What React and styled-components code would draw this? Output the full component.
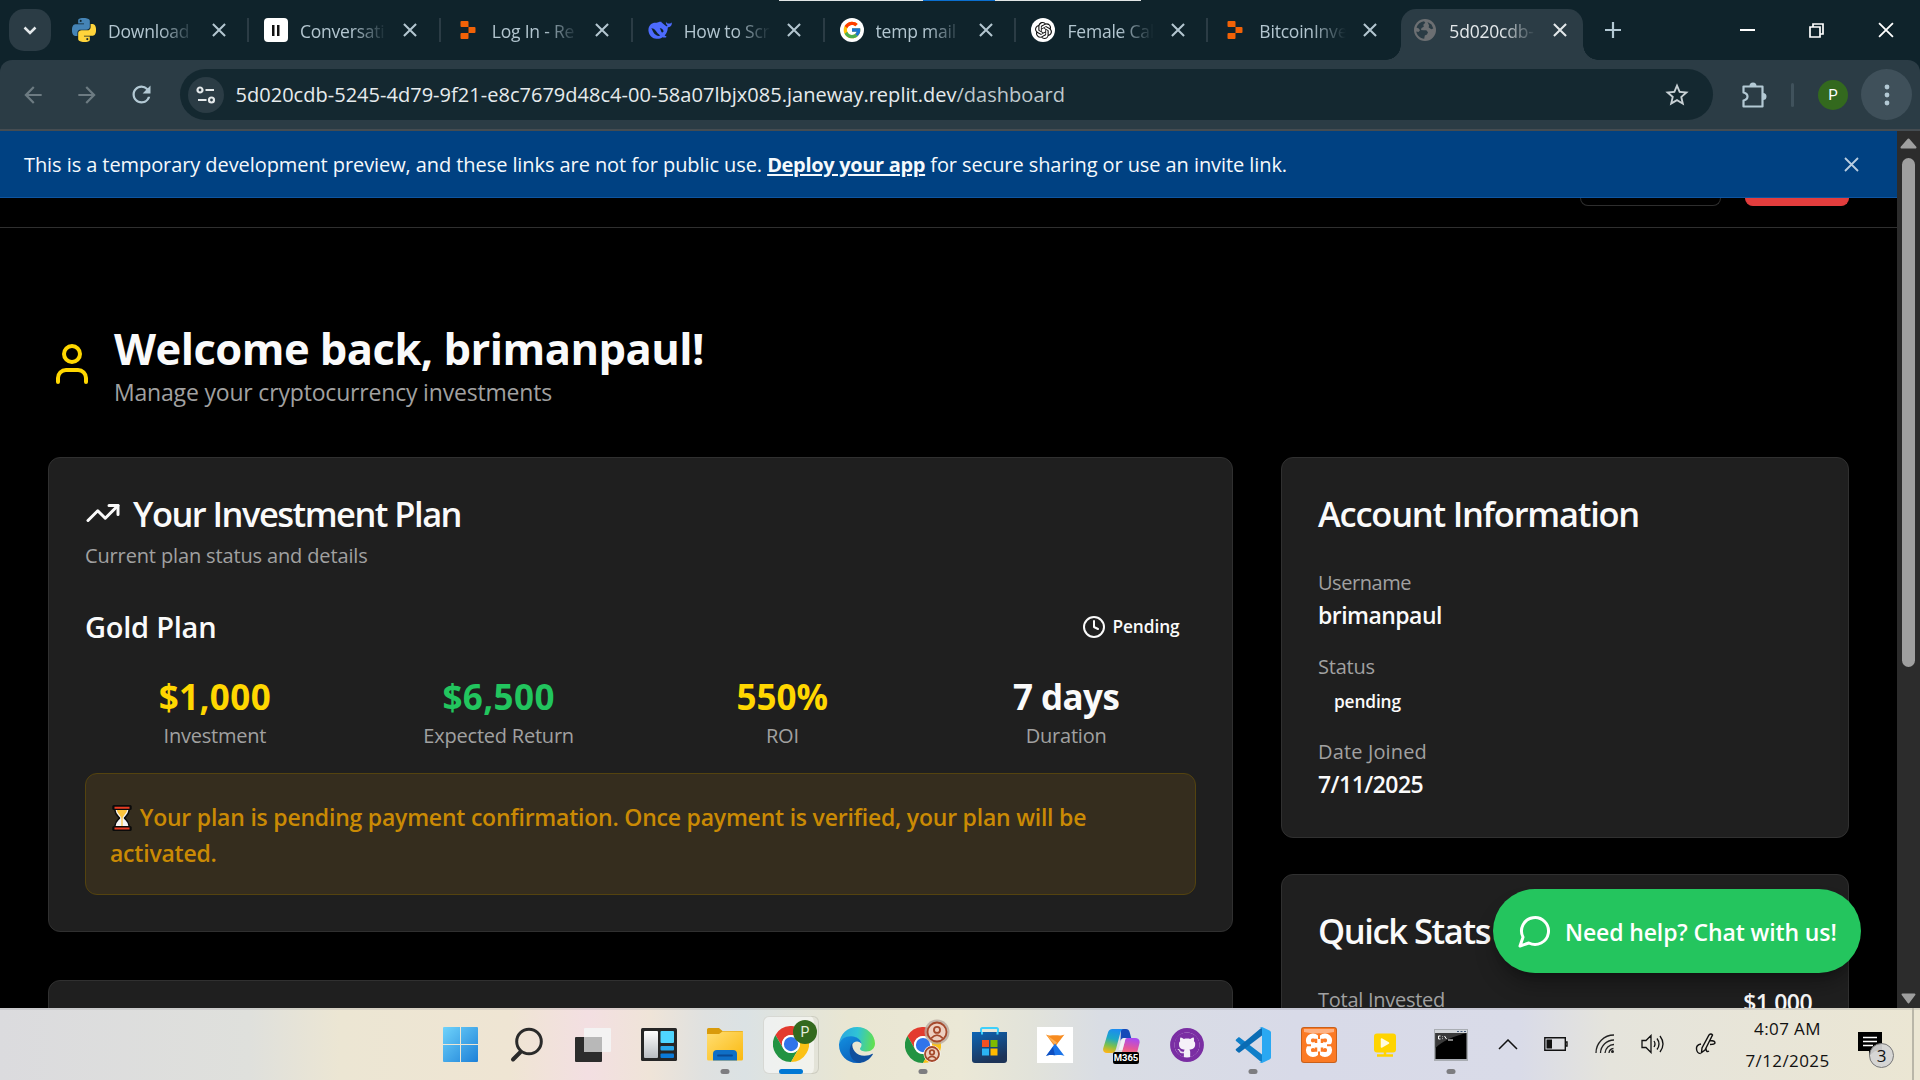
import React from "react";
import styled, { createGlobalStyle, css } from "styled-components";
import { User, TrendingUp, Clock } from "lucide-react";
import { FcGoogle } from "react-icons/fc";
import { FaGithub } from "react-icons/fa";
import { SiOpenai } from "react-icons/si";
import { MdArrowBack, MdArrowForward, MdRefresh, MdStarBorder } from "react-icons/md";

const GlobalStyle = createGlobalStyle`
  * { box-sizing: border-box; margin: 0; }
  html, body { margin: 0; background: #000; overflow: hidden; }
  body { font-family: "Open Sans", "Noto Sans", sans-serif; }
  svg { display: block; flex: none; }
  button { font: inherit; color: inherit; border: 0; background: none; padding: 0; }
`;

/* ---------- window ---------- */

const Desktop = styled.div`
  position: relative;
  width: 1920px;
  height: 1080px;
  display: flex;
  flex-direction: column;
  overflow: hidden;
  background: #0f232b;
`;

const ShareBar = styled.div`
  position: absolute;
  top: 0;
  left: 779px;
  width: 362px;
  height: 1px;
  background: linear-gradient(to right, #e2e6e6 144px, #0a6fd0 144px, #0a6fd0 216px, #e2e6e6 216px);
`;

const TabStrip = styled.header`
  height: 60px;
  flex: none;
  display: flex;
  padding: 9px 0 0 9px;
`;

const TabSearch = styled.button`
  width: 42px;
  height: 42px;
  margin-right: 9px;
  border-radius: 15px;
  background: #2b3c45;
  display: grid;
  place-items: center;
`;

const Tab = styled.div`
  position: relative;
  width: ${(p) => (p.$active ? 182 : p.$last ? 190 : 191.9)}px;
  height: ${(p) => (p.$active ? 51 : 42)}px;
  flex: none;
  display: flex;
  align-items: center;
  padding: ${(p) => (p.$active ? "0 17px 9px 12px" : "0 2px 0 12px")};
  color: ${(p) => (p.$active ? "#e3e8ea" : "#b3c6d0")};
  ${(p) =>
    p.$active &&
    css`
      background: #2b3c45;
      border-radius: 15px 15px 0 0;
      &::before,
      &::after {
        content: "";
        position: absolute;
        bottom: 0;
        width: 15px;
        height: 15px;
      }
      &::before {
        right: 100%;
        background: radial-gradient(circle at 0 0, transparent 14.5px, #2b3c45 15px);
      }
      &::after {
        left: 100%;
        background: radial-gradient(circle at 100% 0, transparent 14.5px, #2b3c45 15px);
      }
    `}
`;

const Favicon = styled.span`
  width: 24px;
  height: 24px;
  flex: none;
  display: grid;
  place-items: center;
  overflow: hidden;
  border-radius: ${(p) => p.$radius || 0}px;
  background: ${(p) => p.$bg || "transparent"};
  color: #111;
`;

const TabTitle = styled.span`
  width: 88px;
  margin-left: 12px;
  flex: none;
  overflow: hidden;
  white-space: nowrap;
  font-size: 17.5px;
  line-height: 26px;
  padding-top: 2px;
  letter-spacing: -0.012em;
  mask-image: linear-gradient(to right, #000 52px, transparent 87px);
`;

const TabClose = styled.button`
  width: 15px;
  height: 15px;
  margin-left: 15.5px;
  flex: none;
`;

const TabDivider = styled.i`
  width: 2px;
  height: 24px;
  margin-left: auto;
  margin-right: 1px;
  background: #2b3c45;
`;

const NewTab = styled.button`
  width: 60px;
  height: 42px;
  display: grid;
  place-items: center;
`;

const WindowButtons = styled.div`
  margin-left: auto;
  display: flex;
  height: 42px;
`;

const WindowButton = styled.button`
  width: 69px;
  display: grid;
  place-items: center;
`;

const Toolbar = styled.div`
  height: 71px;
  flex: none;
  display: flex;
  align-items: center;
  padding: 0 8px 2px 15px;
  background: #2b3c45;
  border-radius: 12px 12px 0 0;
  box-shadow: inset 0 -2px 0 #454c51;
  color: #b3c6d0;
`;

const NavButton = styled.button`
  width: 36px;
  height: 36px;
  margin-right: 18px;
  display: grid;
  place-items: center;
  color: ${(p) => (p.$muted ? "#6d7b82" : "#b3c9d4")};
`;

const Omnibox = styled.div`
  width: 1533px;
  height: 51px;
  flex: none;
  margin-left: 3px;
  border-radius: 26px;
  background: #142830;
  display: flex;
  align-items: center;
  padding: 0 22px 0 8px;
`;

const SiteInfo = styled.span`
  width: 36px;
  height: 36px;
  border-radius: 50%;
  background: #2b3c45;
  display: grid;
  place-items: center;
  margin-right: 11.5px;
`;

const Url = styled.span`
  flex: 1;
  font-size: 20px;
  line-height: 30px;
  letter-spacing: 0.0012em;
  color: #e6ebed;
  white-space: nowrap;
  span { color: #bfc8cc; }
`;

const ExtensionsButton = styled.button`
  width: 28px;
  height: 28px;
  margin-left: 27px;
`;

const ToolbarDivider = styled.i`
  width: 3px;
  height: 24px;
  border-radius: 2px;
  background: #40525c;
  margin: 0 24.5px 0 22.5px;
`;

const Avatar = styled.span`
  width: 30px;
  height: 30px;
  border-radius: 50%;
  background: #33691e;
  color: #fff;
  font: 15px/30px Roboto, sans-serif;
  text-align: center;
`;

const MenuButton = styled.button`
  width: 51px;
  height: 51px;
  margin-left: auto;
  border-radius: 50%;
  background: #3f505a;
  display: grid;
  place-items: center;
`;

/* ---------- page ---------- */

const Viewport = styled.div`
  position: relative;
  height: 877px;
  flex: none;
  display: flex;
  overflow: hidden;
  background: #000;
`;

const Page = styled.div`
  width: 1897px;
  flex: none;
  color: #fafafa;
`;

const Banner = styled.div`
  height: 67px;
  display: flex;
  align-items: center;
  justify-content: space-between;
  padding: 0 38px 0 24px;
  background: #004182;
  border-bottom: 1px solid #0f55a0;
  color: #f5f9fc;
  font-size: 20px;
  line-height: 30px;
  letter-spacing: -0.004em;
  a { font-weight: 700; text-decoration: underline; text-underline-offset: 2px; text-decoration-thickness: 2px; letter-spacing: -0.0164em; }
`;

const BannerText = styled.span`
  padding-top: 1px;
`;

const SiteHeader = styled.div`
  height: 30px;
  display: flex;
  justify-content: flex-end;
  gap: 24px;
  padding-right: 48px;
  border-bottom: 1px solid #2f2f2f;
`;

const HeaderButton = styled.div`
  width: ${(p) => p.$width}px;
  height: 8px;
  border-radius: 0 0 9px 9px;
  border: 1px solid ${(p) => p.$color || "#2e2e2e"};
  border-top: 0;
  background: ${(p) => p.$color || "transparent"};
`;

const Main = styled.main`
  padding: 92px 48px 0;
`;

const Welcome = styled.section`
  display: flex;
  align-items: center;
  gap: 18px;
  height: 90px;
  margin-bottom: 47px;
  > svg { margin-bottom: 2px; }
`;

const PageTitle = styled.h1`
  padding-top: 2px;
  height: 54px;
  font-size: 43.5px;
  line-height: 54px;
  font-weight: 700;
  letter-spacing: -0.0121em;
`;

const Subtitle = styled.p`
  font-size: 23px;
  line-height: 36px;
  letter-spacing: -0.008em;
  color: #a1a1a1;
`;

const Columns = styled.div`
  display: grid;
  grid-template-columns: 1185px 568px;
  gap: 48px;
  align-items: start;
`;

const Stack = styled.div`
  display: flex;
  flex-direction: column;
  gap: ${(p) => p.$gap}px;
`;

const Card = styled.section`
  height: ${(p) => p.$height}px;
  padding: 38px 36px 0;
  border: 1px solid #303030;
  border-radius: 12px;
  background: #1f1f1f;
`;

const CardTitle = styled.h2`
  display: flex;
  align-items: center;
  gap: 12px;
  height: 36px;
  font-size: 34.5px;
  line-height: 36px;
  font-weight: 600;
  letter-spacing: ${(p) => p.$tracking}em;
  white-space: nowrap;
  svg { margin-bottom: 3px; }
`;

const Muted = styled.p`
  font-size: 20px;
  line-height: 30px;
  letter-spacing: ${(p) => p.$tracking || -0.01}em;
  color: #a1a1a1;
  white-space: nowrap;
`;

const CardNote = styled(Muted)`
  margin-top: 9px;
`;

const PlanRow = styled.div`
  display: flex;
  align-items: center;
  justify-content: space-between;
  height: 42px;
  margin-top: 35px;
`;

const PlanName = styled.h3`
  font-size: 29px;
  line-height: 42px;
  font-weight: 600;
  letter-spacing: -0.0085em;
`;

const Badge = styled.span`
  display: flex;
  align-items: center;
  gap: 6px;
  padding: 0 16.5px;
  font-size: 17.3px;
  line-height: 24px;
  font-weight: 600;
  letter-spacing: -0.0057em;
  svg { margin-bottom: 1px; }
`;

const Stats = styled.div`
  display: grid;
  grid-template-columns: repeat(4, 1fr);
  gap: 24px;
  margin: 25px 0 22px;
  text-align: center;
`;

const StatValue = styled.div`
  font-size: 35px;
  line-height: 48px;
  font-weight: 700;
  color: ${(p) => p.$color};
  letter-spacing: ${(p) => p.$tracking}em;
`;

const Alert = styled.div`
  height: 122px;
  padding: 25px 24px 23px;
  border: 1px solid #54430f;
  border-radius: 12px;
  background: #352d1e;
  color: #ca8a04;
  font-size: 23px;
  line-height: 36px;
  font-weight: 600;
  letter-spacing: -0.0095em;
`;

const Emoji = styled.svg`
  && { display: inline-block; }
  width: 24px;
  height: 26px;
  vertical-align: -5px;
`;

const Details = styled.dl`
  display: flex;
  flex-direction: column;
  gap: 18px;
  margin-top: 36px;
`;

const Strong = styled.dd`
  margin: -1px 0 1px;
  font-size: 23px;
  line-height: 36px;
  font-weight: 600;
  letter-spacing: -0.0235em;
`;

const StatusBadge = styled.dd`
  height: 37px;
  padding: 8px 16px 0;
  font-size: 17.3px;
  line-height: 24px;
  font-weight: 600;
  letter-spacing: -0.008em;
`;

const StatLine = styled.div`
  display: flex;
  justify-content: space-between;
  margin-top: 36px;
`;

const ChatButton = styled.button`
  position: absolute;
  right: 59px;
  bottom: 35px;
  width: 368px;
  height: 84px;
  display: flex;
  align-items: center;
  gap: 12px;
  padding-left: 24px;
  border-radius: 42px;
  background: #24c55e;
  color: #fff;
  font-size: 23px;
  font-weight: 600;
  letter-spacing: -0.005em;
  white-space: nowrap;
  box-shadow: 0 15px 22px -4px rgba(0, 0, 0, 0.3), 0 6px 9px -6px rgba(0, 0, 0, 0.3);
  span { padding-top: 2px; }
`;

const Scrollbar = styled.div`
  width: 23px;
  display: flex;
  flex-direction: column;
  align-items: center;
  padding: 7px 0 4px;
  background: #2c2c2c;
`;

const Thumb = styled.div`
  width: 13px;
  height: 509px;
  margin: 9px 0 auto;
  border-radius: 7px;
  background: #9f9f9f;
`;

/* ---------- taskbar ---------- */

const Taskbar = styled.footer`
  height: 72px;
  flex: none;
  display: flex;
  padding-left: 428px;
  color: #111;
  background: linear-gradient(to right, #dbdbde 0, #dfe0dc 250px, #ece6d3 340px, #efe5d3 510px, #f3dfe2 588px, #efe4d8 650px, #dfe1e0 705px, #dbe2e4 745px, #e9e6d2 850px, #ebe8d6 960px, #e2e3da 1030px, #d9dde4 1100px, #d8dae8 1300px, #d9dbe8 1520px, #e5e4dc 1610px, #ebe6d3 1920px);
  box-shadow: inset 0 2px 0 rgba(120, 120, 130, 0.18);
`;

const AppSlot = styled.div`
  position: relative;
  width: 66px;
  flex: none;
  display: grid;
  place-items: center;
  padding-top: 1px;
`;

const ActivePlate = styled.div`
  width: 56px;
  height: 58px;
  display: grid;
  place-items: center;
  padding-bottom: 1px;
  border-radius: 6px;
  background: rgba(255, 255, 255, 0.5);
  box-shadow: inset 0 0 0 1px rgba(120, 120, 100, 0.2), inset -6px 0 0 -1px rgba(200, 200, 180, 0.35);
`;

const Running = styled.i`
  position: absolute;
  left: 50%;
  bottom: 6px;
  width: ${(p) => (p.$active ? 24 : 9)}px;
  height: 5px;
  border-radius: 3px;
  transform: translateX(-50%);
  background: ${(p) => (p.$active ? "#0078d4" : "#7d7d80")};
`;

const ProfileBadge = styled.b`
  position: absolute;
  left: 35px;
  top: 12px;
  width: 24px;
  height: 24px;
  border-radius: 50%;
  background: #33691e;
  color: #e6eedf;
  font: 14px/24px Roboto, sans-serif;
  text-align: center;
`;

const PersonBadges = styled.svg`
  position: absolute;
  left: 31px;
  top: 11px;
`;

const M365Label = styled.span`
  position: absolute;
  left: 25px;
  top: 44px;
  width: 26px;
  height: 12px;
  border-radius: 2px;
  background: #000;
  color: #fff;
  font: 700 9.5px/12px Roboto, sans-serif;
  text-align: center;
`;

const TrayItem = styled.div`
  width: ${(p) => p.$width}px;
  flex: none;
  display: grid;
  place-items: center;
  padding-bottom: ${(p) => p.$lift || 0}px;
`;

const ClockText = styled.div`
  width: 101px;
  flex: none;
  padding-top: 5px;
  text-align: center;
  font-size: 17px;
  line-height: 32px;
  letter-spacing: 0.024em;
  white-space: nowrap;
`;

const Notifications = styled.div`
  position: relative;
  width: 76px;
  flex: none;
  padding: 24px 0 0 20px;
  border-right: 2px solid #b9b6a8;
`;

const Count = styled.span`
  position: absolute;
  left: 31px;
  top: 35px;
  width: 25px;
  height: 25px;
  border: 1px solid #777;
  border-radius: 50%;
  background: rgba(212, 212, 212, 0.93);
  font-size: 17px;
  line-height: 23px;
  font-weight: 500;
  text-align: center;
`;

/* ---------- drawings ---------- */

const Cross = ({ size = 15, width = 2, color = "currentColor" }) => (
  <svg width={size} height={size} viewBox="0 0 15 15" stroke={color} strokeWidth={width}>
    <path d="M1 1 14 14M14 1 1 14" />
  </svg>
);

const snake =
  "M14.25.18l.9.2.73.26.59.3.45.32.34.34.25.34.16.33.1.3.04.26.02.2-.01.13V8.5l-.05.63-.13.55-.21.46-.26.38-.3.31-.33.25-.35.19-.35.14-.33.1-.3.07-.26.04-.21.02H8.77l-.69.05-.59.14-.5.22-.41.27-.33.32-.27.35-.2.36-.15.37-.1.35-.07.32-.04.27-.02.21v3.06H3.17l-.21-.03-.28-.07-.32-.12-.35-.18-.36-.26-.36-.36-.35-.46-.32-.59-.28-.73-.21-.88-.14-1.05-.05-1.23.06-1.22.16-1.04.24-.87.32-.71.36-.57.4-.44.42-.33.42-.24.4-.16.36-.1.32-.05.24-.01h.16l.06.01h8.16v-.83H6.18l-.01-2.75-.02-.37.05-.34.11-.31.17-.28.25-.26.31-.23.38-.2.44-.18.51-.15.58-.12.64-.1.71-.06.77-.04.84-.02 1.27.05zm-6.3 1.98l-.23.33-.08.41.08.41.23.34.33.22.41.09.41-.09.33-.22.23-.34.08-.41-.08-.41-.23-.33-.33-.22-.41-.09-.41.09z";

const PythonLogo = () => (
  <svg width="24" height="24" viewBox="0 0 24 24" fillRule="evenodd">
    <path d={snake} fill="#4584b6" />
    <path d={snake} fill="#ffd43b" transform="rotate(180 12 12)" />
  </svg>
);

const ReplitLogo = () => (
  <svg width="24" height="24" viewBox="0 0 24 24" fill="#f26207">
    <path d="M5.500 3h6a1 1 0 0 1 1 1v5h-7a1 1 0 0 1-1-1V4a1 1 0 0 1 1-1zM12.500 9h6a1 1 0 0 1 1 1v4a1 1 0 0 1-1 1h-6zM5.500 15h7v5a1 1 0 0 1-1 1h-6a1 1 0 0 1-1-1v-4a1 1 0 0 1 1-1z" />
  </svg>
);

const WhaleLogo = () => (
  <svg width="24" height="24" viewBox="0 0 24 24">
    <path fill="#4d6bfe" d="M23.700 4.600c-.300-.100-.400.200-.600.300-1 .900-2.100.700-3.200.600-1.200-.100-1.600-1-1.900-1.900-.300 1.600.200 3.200 1.500 4.200-.500.500-1 .700-1.500.300C16.500 7 15.500 6 14.300 5c-.900-.500-1.200-1-.800-1.200-2-.300-3.800.600-5 1-2.100-.300-4.300.100-5.900 1.600C.500 8.500 0 11.300.700 14.200c.900 3.500 3.700 6.200 7.600 6.600 2.500.300 4.700-.400 6.100-1.600 1 .400 2.300.5 3.300.300.900-.200.800-1 .5-1.200-1-.500-1.600-.800-1.600-.800 1.800-2.200 3-4.500 3.200-7.600 0-.300.100-.500.300-.600 1.700-.300 2.900-1 3.500-2.600.2-.7.300-1.800.100-2.100z" />
    <path fill="#0f232b" d="M3.300 10.300c1.500-.200 2.900.7 4.200 2.300 1.300 1.700 2.700 3.700 4.700 4.900-1.700 1-4.200 0-5.800-1.700C4.800 14 4.600 11.800 3.300 10.300zM11.700 10.300c1.600-.500 3.700 1 3.900 3.300-.6.900-1.500 1.200-2.100.300-.7-1-.9-2.600-1.800-3.600z" />
  </svg>
);

const GlobeIcon = () => (
  <svg width="24" height="24" viewBox="0 0 24 24">
    <circle cx="12" cy="12" r="11" fill="#6c6f72" />
    <path fill="#2b3c45" d="M3.500 9.500c1-3.300 4-5.700 7.500-6.200l1.300 1.500-2 2 .5 2-2.300 1.200-.5 2 2.500.2 2.800.1 1.700 2-1 2.300-2.200.9-.6 3.200c-4.200-.5-7.600-3.700-7.900-7.300l2.200.6 1.500-1.800-1.200-1.700zM14.500 4l4 2.500 1.800 4-2 .8-2.600-1.800.3-2.200z" />
  </svg>
);

const ChromeLogo = () => (
  <svg width="36" height="36" viewBox="0 0 48 48">
    <path fill="#e33b2e" d="M24 12H44.800A24 24 0 0 0 3.200 12L13.600 30A12 12 0 0 1 24 12Z" />
    <path fill="#229342" d="M13.600 30 3.200 12A24 24 0 0 0 24 48L34.400 30A12 12 0 0 1 13.600 30Z" />
    <path fill="#fbc116" d="M34.400 30 24 48A24 24 0 0 0 44.800 12H24A12 12 0 0 1 34.400 30Z" />
    <circle cx="24" cy="24" r="12" fill="#fff" />
    <circle cx="24" cy="24" r="9.500" fill="#2f74ea" />
  </svg>
);

const WindowsLogo = () => (
  <svg width="36" height="35" viewBox="0 0 36 35">
    <defs>
      <linearGradient id="win" x1="0" y1="0" x2="1" y2="1">
        <stop offset="0" stopColor="#6fd3fb" />
        <stop offset="1" stopColor="#1c80d8" />
      </linearGradient>
    </defs>
    <path fill="url(#win)" d="M1 0h16v17H0V1a1 1 0 0 1 1-1zM18 0h16a1 1 0 0 1 1 1v16H18zM0 18h17v17H1a1 1 0 0 1-1-1zM18 18h17v16a1 1 0 0 1-1 1H18z" />
  </svg>
);

const SearchIcon = () => (
  <svg width="36" height="36" viewBox="0 0 36 36" fill="none" stroke="#2a2a2a" strokeLinecap="round">
    <circle cx="20" cy="14.500" r="12.300" strokeWidth="3" />
    <path d="M11.500 25 4 32.500" strokeWidth="4" />
  </svg>
);

const TaskViewIcon = () => (
  <svg width="36" height="34" viewBox="0 0 36 34">
    <rect x="0" y="9" width="27" height="25" rx="1" fill="#2c2c2c" />
    <path d="M10 0h25a1 1 0 0 1 1 1v22a1 1 0 0 1-1 1h-8V9H9V1a1 1 0 0 1 1-1z" fill="#f4f4f4" opacity=".92" />
    <path d="M9 9h18v15H9z" fill="#b8b8b8" />
  </svg>
);

const WidgetsIcon = () => (
  <svg width="36" height="33" viewBox="0 0 36 33">
    <defs>
      <linearGradient id="pane" x1="0" y1="0" x2="0" y2="1">
        <stop offset="0" stopColor="#fff" />
        <stop offset="1" stopColor="#b9bdc2" />
      </linearGradient>
    </defs>
    <rect width="36" height="33" rx="1.500" fill="#262626" />
    <rect x="3" y="3" width="14" height="27" rx="1" fill="url(#pane)" />
    <rect x="19.500" y="3" width="13.500" height="12" rx="1" fill="#4fd6ff" />
    <rect x="19.500" y="18" width="13.500" height="4.500" rx="1" fill="#28a8ea" />
    <rect x="19.500" y="25.500" width="13.500" height="4.500" rx="1" fill="#0a7ad8" />
  </svg>
);

const FolderIcon = () => (
  <svg width="36" height="33" viewBox="0 0 36 33">
    <defs>
      <linearGradient id="fold" x1="0" y1="0" x2="1" y2="1">
        <stop offset="0" stopColor="#ffde73" />
        <stop offset="1" stopColor="#fbb90f" />
      </linearGradient>
    </defs>
    <path d="M0 1.500A1.500 1.500 0 0 1 1.500 0H12l3.500 3H35a1 1 0 0 1 1 1v10H0z" fill="#d99b0b" />
    <path d="M0 6h12l3.500-2.500H36V31a1.500 1.500 0 0 1-1.500 1.500h-33A1.500 1.500 0 0 1 0 31z" fill="url(#fold)" />
    <path d="M6 32.500V26a4 4 0 0 1 4-4h16a4 4 0 0 1 4 4v6.500z" fill="#0f6fc6" />
    <path d="M11 27.500h14" stroke="#0a4a94" strokeWidth="1.800" strokeLinecap="round" />
  </svg>
);

const EdgeLogo = () => (
  <svg width="36" height="36" viewBox="0 0 36 36">
    <defs>
      <linearGradient id="edgeA" x1="0" y1="0.300" x2="1" y2="0.400">
        <stop offset="0" stopColor="#2aa5e0" />
        <stop offset="0.500" stopColor="#2fc3d6" />
        <stop offset="1" stopColor="#62e04f" />
      </linearGradient>
      <linearGradient id="edgeB" x1="0" y1="0" x2="0.500" y2="1">
        <stop offset="0" stopColor="#1390e0" />
        <stop offset="1" stopColor="#0a62bd" />
      </linearGradient>
    </defs>
    <path fill="url(#edgeA)" d="M0 17C1 7 8.500 0 18 0c10 0 18 7.500 18 16.500 0 4.800-3.800 8-8.500 8-4 0-6.500-1.500-6.500-2.800 0-1 1.500-1.600 1.500-4 0-4-4-7.700-9.500-7.700C6 10 1.500 12.500 0 17z" />
    <path fill="url(#edgeB)" d="M0 17c1.500-5 6.500-8 12.500-7.700 5 .2 9.500 3 10 7.700-1.500-3-8-4-10 2-2 7 3 15.500 10.500 16.500-1.500.5-3 .5-5 .5C8 36 0 28 0 18z" />
    <path fill="#0f4f9e" d="M13.500 15.500c-1.500 7 4.500 13.500 12 13.300 3.500 0 6-1 7.800-2 .5-.2.800.200.500.700C30.500 33 25 36 20 35.700 12 34.500 7.500 24 13.500 15.500z" />
  </svg>
);

const StoreIcon = () => (
  <svg width="35" height="36" viewBox="0 0 35 36">
    <defs>
      <linearGradient id="store" x1="0" y1="0" x2="0.400" y2="1">
        <stop offset="0" stopColor="#0c65b6" />
        <stop offset="1" stopColor="#1d3357" />
      </linearGradient>
    </defs>
    <path d="M9 6V2.500A1.500 1.500 0 0 1 10.500 1h14A1.500 1.500 0 0 1 26 2.500V6" fill="none" stroke="#3fd0fb" strokeWidth="2" />
    <path d="M0 5h35v28a3 3 0 0 1-3 3H3a3 3 0 0 1-3-3z" fill="url(#store)" />
    <path d="M10 5V7.500M25.500 5V7.500" stroke="#3fd0fb" strokeWidth="2" />
    <path d="M10 13h7v7h-7z" fill="#f25022" />
    <path d="M18.500 13h7v7h-7z" fill="#7fba00" />
    <path d="M10 21.500h7v7h-7z" fill="#2bb3f3" />
    <path d="M18.500 21.500h7v7h-7z" fill="#ffb900" />
  </svg>
);

const XenderIcon = () => (
  <svg width="36" height="36" viewBox="0 0 36 36">
    <path fill="#fff" d="M0 0h36v36H0z" />
    <path fill="#f78b1f" d="M9 7.500c3 1.600 5.500.800 9 .8s6 .8 9.500-.8L19 18.500h-2z" />
    <path fill="#ffb054" d="M9 7.500 18 18l2-2.500z" />
    <path fill="#1b74e8" d="M18 16.500 27.500 29c-3-1.500-6-.8-9.500-.8s-6-.7-9 .8z" />
    <path fill="#0f4fc0" d="M16 20 9 29c3-1.500 5.500-.8 9-.8z" />
  </svg>
);

const CopilotIcon = () => (
  <svg width="37" height="36" viewBox="0 0 37 36">
    <defs>
      <linearGradient id="copA" x1="0.500" y1="0" x2="0.300" y2="1">
        <stop offset="0" stopColor="#1c8cf0" />
        <stop offset="0.400" stopColor="#1ea9c4" />
        <stop offset="0.700" stopColor="#7cc04c" />
        <stop offset="1" stopColor="#fdb515" />
      </linearGradient>
      <linearGradient id="copB" x1="0.500" y1="0" x2="0.300" y2="1">
        <stop offset="0" stopColor="#a94bf0" />
        <stop offset="0.500" stopColor="#e4569c" />
        <stop offset="1" stopColor="#ff8a5c" />
      </linearGradient>
    </defs>
    <path fill="#1649b8" d="M18 2h5c2 0 3 1.200 3.600 3l1.600 6h-7c-2 0-3.200 1-3.700 3z" />
    <path fill="url(#copA)" d="M9.500 2H21c-2 0-3 1.500-3.600 3.500L13 22c-.8 2.500-2 4-4.500 4H4c-3 0-4.500-2-3.700-5L5 5.500C5.700 3.200 7 2 9.500 2z" />
    <path fill="url(#copB)" d="M23 11h9c3.500 0 5.300 2.200 4.400 5.500L33 30H15c2 0 3-1.500 3.600-3.500L22 14c.5-2 0-3 1-3z" />
    <path fill="#fff" opacity=".6" d="M18.500 13c.5-1.500 1.500-2 3-2h3c-1.500 0-2 1-2.500 2.500L19.500 23h-4z" />
  </svg>
);

const GithubDesktopIcon = () => (
  <svg width="34" height="34" viewBox="0 0 34 34">
    <circle cx="17" cy="17" r="13.500" fill="#f5f1f8" />
    <FaGithub x="4" y="4" size={26} color="#7a2ea3" />
    <circle cx="17" cy="17" r="14.700" fill="none" stroke="#7a2ea3" strokeWidth="4.400" />
  </svg>
);

const VSCodeLogo = () => (
  <svg width="36" height="36" viewBox="0 0 36 36">
    <path fill="#0f7fc9" d="M1 12.500 3 10.700c.5-.5 1.200-.5 1.700-.1L27 27.500V35c-.7 0-1.300-.2-1.800-.7L1 14c-.5-.5-.5-1 0-1.500z" />
    <path fill="#0a6cb4" d="M1 23.500 3 25.300c.5.500 1.200.5 1.700.1L27 8.500V1c-.7 0-1.300.2-1.800.7L1 22c-.5.500-.5 1 0 1.500z" />
    <path fill="#2aa8f2" d="M27 0l7.500 3.500c1 .5 1.500 1.300 1.500 2.300v24.400c0 1-.5 1.800-1.500 2.300L27 36c-1.200.5-2 0-2.500-.7.900.5 2.500 0 2.500-1.500V2.200C27 .8 25.500.2 24.500.7 25 0 26-.4 27 0z" />
  </svg>
);

const XamppIcon = () => (
  <svg width="36" height="36" viewBox="0 0 36 36">
    <rect width="36" height="36" rx="3" fill="#c9601a" />
    <rect x="1" y="1" width="34" height="34" rx="2.500" fill="#fb7a24" />
    <path d="M3 2h30v3q-15 3-30 0z" fill="#fdb182" />
    <g fill="none" stroke="#fff" strokeWidth="5">
      <circle cx="12" cy="13.500" r="4.600" />
      <circle cx="24" cy="13.500" r="4.600" />
      <circle cx="12" cy="23" r="4.600" />
      <circle cx="24" cy="23" r="4.600" />
    </g>
    <path d="M12 18.200h12" stroke="#fff" strokeWidth="5" />
    <path d="M5 18.200h5M26 18.200h5M18 6.500v5.500M18 24.500V30" stroke="#fb7a24" strokeWidth="2" />
    <path d="M10.500 13h4.500v3M10.500 23.500h4.500v-3M25.500 13H21v3M25.500 23.500H21v-3" stroke="#fb7a24" strokeWidth="2.500" fill="none" />
  </svg>
);

const PlayScreenIcon = () => (
  <svg width="24" height="24" viewBox="0 0 24 24">
    <rect x="1" y="0.500" width="22" height="19" rx="3" fill="#ffd400" />
    <path d="M8.500 6v8l7-4z" fill="#fffbe0" stroke="#fffbe0" strokeWidth="1.500" strokeLinejoin="round" />
    <path d="M12 19v3M4 22.500h16" stroke="#ffd400" strokeWidth="2.500" />
  </svg>
);

const TerminalIcon = () => (
  <svg width="34" height="32" viewBox="0 0 34 32">
    <path fill="#a9adb3" d="M0 0h34v32H0z" />
    <path fill="#d3d6da" d="M1 1h32v3H1z" />
    <path fill="#000" d="M1.500 4h31v26h-31z" />
    <path fill="#3a3a3a" d="M1.500 4h31C20 7 8 12 1.500 19z" />
    <path d="M6.500 7H4.500v3h2M8.500 7.500v.6M8.500 9.500v.6M10.500 7l2 3M14 11h5" stroke="#fff" strokeWidth="1" fill="none" />
    <path d="M23 2.500h2M26.500 2.500h2M30 2.500h2" stroke="#43597a" />
  </svg>
);

const Hourglass = () => (
  <Emoji viewBox="0 0 24 26">
    <path d="M5 3h14v2.500c0 3.500-3 5.500-4.500 7.500 1.500 2 4.500 4 4.500 7.500V23H5v-2.500C5 17 8 15 9.500 13 8 11 5 9 5 5.500z" fill="#f4f4f4" stroke="#0b0b0b" strokeWidth="1.500" strokeLinejoin="round" />
    <path d="M7 5h10c0 3-3 4.500-4.400 8v8h-1.200v-8C10 9.500 7 8 7 5z" fill="#fcc43e" />
    <rect x="2.300" y="0" width="19.400" height="5" rx="1.500" fill="#0b0b0b" />
    <rect x="2.300" y="21" width="19.400" height="5" rx="1.500" fill="#0b0b0b" />
    <path d="M4.500 2.800h15M4.500 23.500h15" stroke="#ea3c22" strokeWidth="2" />
  </Emoji>
);

const person = (cx, cy, r) => (
  <g fill="none" stroke="#a5492c" strokeWidth="1.800">
    <circle cx={cx} cy={cy} r={r} fill="#edcfc0" />
    <circle cx={cx} cy={cy - r * 0.22} r={r * 0.32} />
    <path d={`M${cx - r * 0.62} ${cy + r * 0.68}q${r * 0.62}-${r * 0.7} ${r * 1.24} 0`} />
  </g>
);

/* ---------- data ---------- */

const tabs = [
  { title: "Download", icon: <PythonLogo /> },
  { title: "Conversati", icon: <svg width="8" height="11" viewBox="0 0 8 11"><path d="M0 0h2.500v11H0zM5 0h2.500v11H5z" fill="#111" /></svg>, bg: "#fff", radius: 4 },
  { title: "Log In - Re", icon: <ReplitLogo /> },
  { title: "How to Scr", icon: <WhaleLogo /> },
  { title: "temp mail", icon: <FcGoogle size={20} />, bg: "#fff", radius: 12 },
  { title: "Female Cal", icon: <SiOpenai size={17} />, bg: "#fff", radius: 12 },
  { title: "BitcoinInve", icon: <ReplitLogo />, last: true },
  { title: "5d020cdb-", icon: <GlobeIcon />, active: true },
];

const stats = [
  { value: "$1,000", label: "Investment", color: "#ffd700", tracking: 0.011 },
  { value: "$6,500", label: "Expected Return", color: "#22c55e", tracking: 0.011 },
  { value: "550%", label: "ROI", color: "#ffd700", tracking: 0 },
  { value: "7 days", label: "Duration", color: "#fafafa", tracking: -0.0165 },
];

const apps = [
  { icon: <WindowsLogo /> },
  { icon: <SearchIcon /> },
  { icon: <TaskViewIcon /> },
  { icon: <WidgetsIcon /> },
  { icon: <FolderIcon />, running: true },
  { icon: <ActivePlate><ChromeLogo /></ActivePlate>, extra: <ProfileBadge>P</ProfileBadge>, running: true, active: true },
  { icon: <EdgeLogo /> },
  {
    icon: <ChromeLogo />,
    extra: (
      <PersonBadges width="34" height="46" viewBox="0 0 34 46">
        <circle cx="16" cy="13" r="12.500" fill="#b9a79d" opacity=".8" />
        {person(16, 13, 9.5)}
        <circle cx="11" cy="35" r="8.500" fill="#fff" />
        {person(11, 35, 7)}
      </PersonBadges>
    ),
    running: true,
  },
  { icon: <StoreIcon /> },
  { icon: <XenderIcon /> },
  { icon: <CopilotIcon />, extra: <M365Label>M365</M365Label> },
  { icon: <GithubDesktopIcon /> },
  { icon: <VSCodeLogo />, running: true },
  { icon: <XamppIcon /> },
  { icon: <PlayScreenIcon /> },
  { icon: <TerminalIcon />, running: true },
];

export default function App() {
  return (
    <Desktop>
      <GlobalStyle />
      <TabStrip>
        <TabSearch>
          <svg width="14" height="9" viewBox="0 0 14 9" fill="none" stroke="#e3e8ea" strokeWidth="2.500"><path d="m1.500 1.500 5.500 5.500 5.500-5.500" /></svg>
        </TabSearch>
        {tabs.map((t) => (
          <Tab key={t.title} $active={t.active} $last={t.last}>
            <Favicon $bg={t.bg} $radius={t.radius}>{t.icon}</Favicon>
            <TabTitle>{t.title}</TabTitle>
            <TabClose><Cross size={14} width={2.2} /></TabClose>
            {!t.active && !t.last && <TabDivider />}
          </Tab>
        ))}
        <NewTab>
          <svg width="16" height="16" viewBox="0 0 16 16" stroke="#b3c9d4" strokeWidth="2.200"><path d="M8 0v16M0 8h16" /></svg>
        </NewTab>
        <WindowButtons>
          <WindowButton><svg width="15" height="2"><path d="M0 0h15v2H0z" fill="#fff" /></svg></WindowButton>
          <WindowButton>
            <svg width="15" height="15" viewBox="0 0 15 15" fill="none" stroke="#fff" strokeWidth="1.700"><path d="M1 4h10v10H1zM4 4V1h10v10h-3" /></svg>
          </WindowButton>
          <WindowButton><Cross size={16} width={1.7} color="#fff" /></WindowButton>
        </WindowButtons>
      </TabStrip>
      <ShareBar />

      <Toolbar>
        <NavButton $muted><MdArrowBack size={26} /></NavButton>
        <NavButton $muted><MdArrowForward size={26} /></NavButton>
        <NavButton><MdRefresh size={27} /></NavButton>
        <Omnibox>
          <SiteInfo>
            <svg width="20" height="18" viewBox="0 0 20 18" fill="none" stroke="#e3e8ea" strokeWidth="2.200">
              <circle cx="4" cy="4" r="2.500" /><path d="M9.500 4H18M2 14h8.500" /><circle cx="15.500" cy="14" r="2.500" />
            </svg>
          </SiteInfo>
          <Url>5d020cdb-5245-4d79-9f21-e8c7679d48c4-00-58a07lbjx085.janeway.replit.dev<span>/dashboard</span></Url>
          <MdStarBorder size={28} color="#c7d0d4" />
        </Omnibox>
        <ExtensionsButton>
          <svg width="28" height="28" viewBox="0 0 28 28" fill="none" stroke="#b3c9d4" strokeWidth="2.200" strokeLinejoin="round">
            <path d="M3.500 5.500H22.500V25.500H3.500V19.500Q7.500 18.500 7.500 15.500T3.500 11.500Z" />
            <path d="M9.500 5a3.500 3.500 0 0 1 7 0zM23 12a3.500 3.500 0 0 1 0 7z" fill="#b3c9d4" stroke="none" />
          </svg>
        </ExtensionsButton>
        <ToolbarDivider />
        <Avatar>P</Avatar>
        <MenuButton>
          <svg width="6" height="22" viewBox="0 0 6 22" fill="#b3c9d4"><circle cx="3" cy="3" r="2.400" /><circle cx="3" cy="11" r="2.400" /><circle cx="3" cy="19" r="2.400" /></svg>
        </MenuButton>
      </Toolbar>

      <Viewport>
        <Page>
          <Banner>
            <BannerText>This is a temporary development preview, and these links are not for public use. <a>Deploy your app</a> for secure sharing or use an invite link.</BannerText>
            <Cross size={15} width={1.8} color="#b9cde0" />
          </Banner>
          <SiteHeader>
            <HeaderButton $width={141} />
            <HeaderButton $width={104} $color="#e23d3d" />
          </SiteHeader>
          <Main>
            <Welcome>
              <User size={48} color="#ffd700" strokeWidth={2} />
              <div>
                <PageTitle>Welcome back, brimanpaul!</PageTitle>
                <Subtitle>Manage your cryptocurrency investments</Subtitle>
              </div>
            </Welcome>
            <Columns>
              <Stack $gap={48}>
                <Card $height={475}>
                  <CardTitle $tracking={-0.0442}><TrendingUp size={36} strokeWidth={2} />Your Investment Plan</CardTitle>
                  <CardNote $tracking={-0.007}>Current plan status and details</CardNote>
                  <PlanRow>
                    <PlanName>Gold Plan</PlanName>
                    <Badge><Clock size={24} strokeWidth={2} />Pending</Badge>
                  </PlanRow>
                  <Stats>
                    {stats.map((s) => (
                      <div key={s.label}>
                        <StatValue $color={s.color} $tracking={s.tracking}>{s.value}</StatValue>
                        <Muted $tracking={-0.011}>{s.label}</Muted>
                      </div>
                    ))}
                  </Stats>
                  <Alert>
                    <Hourglass /> Your plan is pending payment confirmation. Once payment is verified, your plan will be activated.
                  </Alert>
                </Card>
                <Card $height={200} />
              </Stack>
              <Stack $gap={36}>
                <Card $height={381}>
                  <CardTitle $tracking={-0.036}>Account Information</CardTitle>
                  <Details>
                    <div><Muted as="dt" $tracking={-0.0228}>Username</Muted><Strong>brimanpaul</Strong></div>
                    <div><Muted as="dt">Status</Muted><StatusBadge>pending</StatusBadge></div>
                    <div><Muted as="dt" $tracking={0.0074}>Date Joined</Muted><Strong>7/11/2025</Strong></div>
                  </Details>
                </Card>
                <Card $height={300}>
                  <CardTitle $tracking={-0.0411}>Quick Stats</CardTitle>
                  <StatLine><Muted $tracking={-0.0133}>Total Invested</Muted><Strong as="span">$1,000</Strong></StatLine>
                </Card>
              </Stack>
            </Columns>
          </Main>
        </Page>
        <Scrollbar>
          <svg width="17" height="11" viewBox="0 0 17 11"><path d="M8.500 1.500 15.500 9.500h-14z" fill="#9f9f9f" stroke="#9f9f9f" strokeWidth="2" strokeLinejoin="round" /></svg>
          <Thumb />
          <svg width="17" height="11" viewBox="0 0 17 11"><path d="M8.500 9.500 14.500 1.500h-12z" fill="#9f9f9f" stroke="#9f9f9f" strokeWidth="2" strokeLinejoin="round" /></svg>
        </Scrollbar>
        <ChatButton>
          <svg width="36" height="36" viewBox="0 0 24 24" fill="none" stroke="#fff" strokeWidth="2" strokeLinecap="round" strokeLinejoin="round"><path d="M7.900 20A9 9 0 1 0 4 16.100L2 22Z" /></svg>
          <span>Need help? Chat with us!</span>
        </ChatButton>
      </Viewport>

      <Taskbar>
        {apps.map((a, i) => (
          <AppSlot key={i}>
            {a.icon}
            {a.extra}
            {a.running && <Running $active={a.active} />}
          </AppSlot>
        ))}
        <TrayItem $width={48}><svg width="20" height="11" viewBox="0 0 20 11" fill="none" stroke="#111" strokeWidth="1.500"><path d="m1 10 9-9 9 9" /></svg></TrayItem>
        <TrayItem $width={48}>
          <svg width="24" height="14" viewBox="0 0 24 14"><path d="M.8.800h20.500v12.400H.800zM21.500 5h1.500v4h-1.500" fill="none" stroke="#111" strokeWidth="1.400" /><path d="M2.500 2.500h5.500v9H2.500z" fill="#111" /></svg>
        </TrayItem>
        <TrayItem $width={49}>
          <svg width="20" height="20" viewBox="0 0 20 20" fill="none" stroke="#222" strokeWidth="1.300"><path d="M1 19A18 18 0 0 1 19 1M5.500 19A13.500 13.500 0 0 1 19 6M10 19a9 9 0 0 1 9-8.500M14 19a5 5 0 0 1 4.500-4.500" /><circle cx="17.500" cy="17.500" r="1.500" fill="#222" stroke="none" /></svg>
        </TrayItem>
        <TrayItem $width={46} $lift={1}>
          <svg width="23" height="20" viewBox="0 0 23 20" fill="none" stroke="#111" strokeWidth="1.300"><path d="M1 6.500h4l5-5v17l-5-5H1zM13 7q2 3 0 6M16 4.500q4 5.500 0 11M19 2q6 8 0 16" /></svg>
        </TrayItem>
        <TrayItem $width={62}>
          <svg width="22" height="22" viewBox="0 0 22 22" fill="none" stroke="#111" strokeWidth="1.400"><path d="M14 2q2-2 3.500 0L10 17l-3.500 2.500L7 15zM6 11q-5 1-4.500 5 .5 4.500 4 4.500M11 15q0 5 3 3M15 7.500q5 0 5 2.500-.5 1.500-5 1.500" /></svg>
        </TrayItem>
        <ClockText>4:07 AM<br />7/12/2025</ClockText>
        <Notifications>
          <svg width="24" height="24" viewBox="0 0 24 24"><path d="M0 0h24v19H17l-6 5v-5H0z" fill="#000" /><path d="M5 5.500h14M5 9.500h14M5 13.500h10" stroke="#fff" strokeWidth="1.300" /></svg>
          <Count>3</Count>
        </Notifications>
      </Taskbar>
    </Desktop>
  );
}
